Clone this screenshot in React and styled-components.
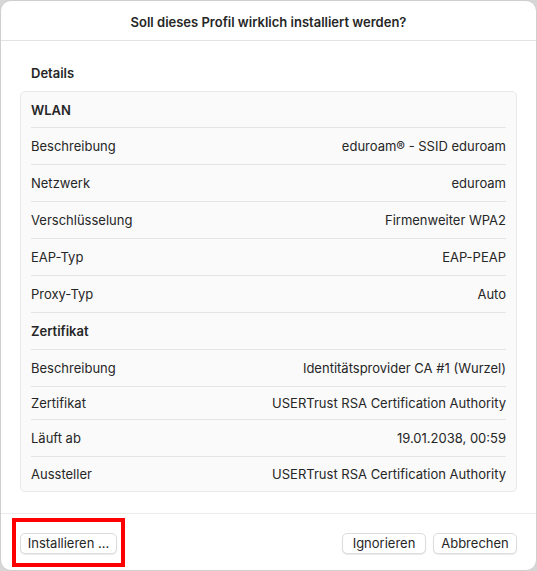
import React from 'react';
import styled, { createGlobalStyle } from 'styled-components';

const GlobalStyle = createGlobalStyle`
  html, body {
    margin: 0;
    padding: 0;
    background: #d6d6d6;
  }
  body {
    font-family: Inter, "Noto Sans", "Liberation Sans", sans-serif;
    color: #262626;
    -webkit-font-smoothing: antialiased;
  }
`;

const SECTIONS = [
  {
    title: 'WLAN',
    rows: [
      ['Beschreibung', 'eduroam® - SSID eduroam'],
      ['Netzwerk', 'eduroam'],
      ['Verschlüsselung', 'Firmenweiter WPA2'],
      ['EAP-Typ', 'EAP-PEAP'],
      ['Proxy-Typ', 'Auto'],
    ],
  },
  {
    title: 'Zertifikat',
    rows: [
      ['Beschreibung', 'Identitätsprovider CA #1 (Wurzel)'],
      ['Zertifikat', 'USERTrust RSA Certification Authority', 33],
      ['Läuft ab', '19.01.2038, 00:59'],
      ['Aussteller', 'USERTrust RSA Certification Authority', 35],
    ],
  },
];

class App extends React.PureComponent {
  render() {
    return (
      <>
        <GlobalStyle />
        <Window>
          <Header>Soll dieses Profil wirklich installiert werden?</Header>
          <Body>
            <SectionLabel>Details</SectionLabel>
            <Panel>
              {SECTIONS.map((section, sIdx) => (
                <React.Fragment key={section.title}>
                  <Row height={sIdx === 0 ? 35 : 37} first={sIdx === 0}>
                    <GroupTitle>{section.title}</GroupTitle>
                  </Row>
                  {section.rows.map(([label, value, h]) => (
                    <Row key={label + value} height={h || 37}>
                      <Label>{label}</Label>
                      <Value>{value}</Value>
                    </Row>
                  ))}
                </React.Fragment>
              ))}
            </Panel>
          </Body>
          <Footer>
            <Highlighted>
              <Button width={97}>Installieren …</Button>
            </Highlighted>
            <ButtonGroup>
              <Button width={84}>Ignorieren</Button>
              <Button width={84}>Abbrechen</Button>
            </ButtonGroup>
          </Footer>
        </Window>
      </>
    );
  }
}

export default App;

const Window = styled.div`
  box-sizing: border-box;
  width: 537px;
  height: 571px;
  background: #ffffff;
  border-radius: 11px;
  border: 1px solid #cfcfcf;
  display: flex;
  flex-direction: column;
  overflow: hidden;
`;

const Header = styled.div`
  height: 40px;
  flex: none;
  display: flex;
  align-items: center;
  justify-content: center;
  padding-top: 2px;
  box-sizing: border-box;
  font-size: 13px;
  font-weight: 600;
  color: #262626;
  border-bottom: 1px solid #e3e3e3;
`;

const Body = styled.div`
  flex: 1;
  padding: 0 19px 0 19px;
  display: flex;
  flex-direction: column;
`;

const SectionLabel = styled.div`
  height: 50px;
  box-sizing: border-box;
  padding: 24px 0 0 11px;
  font-size: 13px;
  font-weight: 600;
`;

const Panel = styled.div`
  background: #fafafa;
  border: 1px solid #e8e8e8;
  border-radius: 5px;
  padding: 0 10px;
  display: flex;
  flex-direction: column;
`;

const Row = styled.div`
  height: ${({ height }) => height}px;
  box-sizing: border-box;
  display: flex;
  align-items: center;
  justify-content: space-between;
  font-size: 13px;
  border-top: ${({ first }) => (first ? 'none' : '1px solid #e4e4e4')};
`;

const GroupTitle = styled.span`
  font-weight: 600;
`;

const Label = styled.span`
  color: #262626;
`;

const Value = styled.span`
  color: #262626;
  text-align: right;
`;

const Footer = styled.div`
  position: relative;
  height: 57px;
  flex: none;
  box-sizing: border-box;
  border-top: 1px solid #ececec;
  display: flex;
  align-items: center;
  justify-content: space-between;
  padding: 2px 19px 0 19px;
`;

const Highlighted = styled.div`
  position: relative;

  &::after {
    content: '';
    position: absolute;
    left: -8px;
    right: -8px;
    top: -15px;
    bottom: -13px;
    border: 4px solid #ff0000;
    pointer-events: none;
  }
`;

const ButtonGroup = styled.div`
  display: flex;
  gap: 7px;
`;

const Button = styled.button`
  box-sizing: border-box;
  height: 21px;
  ${({ width }) => (width ? `width: ${width}px;` : 'padding: 0 9px;')}
  padding: 0;
  font-family: inherit;
  font-size: 13px;
  color: #262626;
  background: #ffffff;
  border: 1px solid #dcdcdc;
  border-radius: 5px;
  box-shadow: 0 1px 1px rgba(0, 0, 0, 0.08);
  display: flex;
  align-items: center;
  justify-content: center;
`;
